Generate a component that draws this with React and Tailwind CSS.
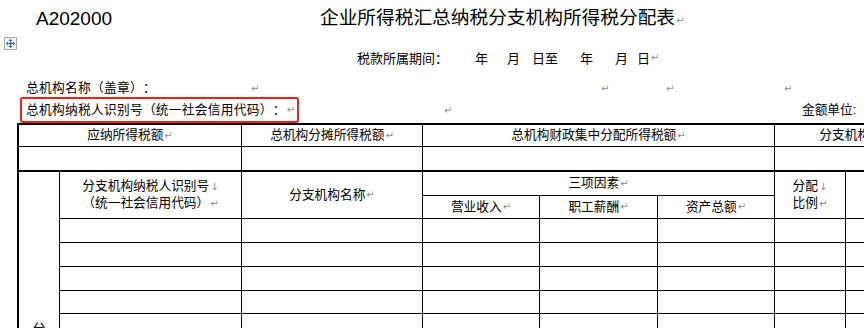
import React from "react";

// Word 段落标记
function Mark({ down = false }) {
  return (
    <span className="font-['DejaVu_Sans',sans-serif] text-[10px] leading-none text-[#8c8c8c] ml-[1px]">
      {down ? "↓" : "↵"}
    </span>
  );
}

function MoveIcon() {
  return (
    <svg width="13" height="13" viewBox="0 0 13 13">
      <rect x="0.5" y="0.5" width="12" height="12" fill="#f3f3f3" stroke="#a8a8a8" />
      <path d="M6.5 3v7M3 6.5h7" stroke="#2a62c8" strokeWidth="1" />
      <path d="M6.5 2l-2 2h4z M6.5 11l-2-2h4z M2 6.5l2-2v4z M11 6.5l-2-2v4z" fill="#2a62c8" />
    </svg>
  );
}

function Cell({ className = "", children }) {
  return (
    <div className={"border-r border-b border-black flex items-center justify-center text-center " + className}>
      {children}
    </div>
  );
}

export default function App() {
  const dataRows = [5, 6, 7, 8, 9];

  return (
    <div className="w-[864px] h-[328px] overflow-hidden bg-white text-black [text-spacing-trim:space-all] font-['Liberation_Sans','Noto_Sans_CJK_SC',sans-serif]">
      {/* 表号 + 标题 */}
      <div className="h-[36px] flex items-center">
        <div className="pl-[36px] w-[320px] text-[19px] leading-none">A202000</div>
        <div className="text-[18.7px] leading-none">
          企业所得税汇总纳税分支机构所得税分配表
          <Mark />
        </div>
      </div>

      {/* 表格移动手柄 */}
      <div className="h-[14px] pl-[4px] pt-[1px]">
        <MoveIcon />
      </div>

      {/* 税款所属期间 */}
      <div className="h-[16px] flex items-center text-[13px] leading-none pl-[357px]">
        <span>税款所属期间：</span>
        <span className="ml-[27px]">年</span>
        <span className="ml-[19px]">月</span>
        <span className="ml-[12px]">日至</span>
        <span className="ml-[22px]">年</span>
        <span className="ml-[22px]">月</span>
        <span className="ml-[9px]">日</span>
        <Mark />
      </div>

      <div className="h-[14px]" />

      {/* 总机构名称 */}
      <div className="h-[16px] flex items-center text-[12.7px] leading-none tracking-[0.3px]">
        <div className="w-[250px] pl-[26px]">总机构名称（盖章）：</div>
        <div className="w-[350px]"><Mark /></div>
        <div className="w-[65px]"><Mark /></div>
        <div className="w-[118px]"><Mark /></div>
        <div><Mark /></div>
      </div>

      {/* 纳税人识别号 */}
      <div className="relative z-10 mt-[1px] h-[26px] flex items-center text-[12.7px] leading-none pl-[20px]">
        <div className="w-[279px] h-[26px] border-2 border-[#e4241f] rounded-[3px] flex items-center pl-[4px] whitespace-nowrap tracking-[0.3px]">
          总机构纳税人识别号（统一社会信用代码）：
          <Mark />
        </div>
        <div className="w-[503px] pl-[144px]"><Mark /></div>
        <div className="whitespace-nowrap">金额单位:</div>
      </div>

      {/* 分配表 */}
      <div className="ml-[17px] w-[1000px] border-l-2 border-t-2 border-black grid grid-cols-[41px_182px_181px_117px_118px_117px_71px_155px] grid-rows-[22px_25px_24px_23px_24px_24px_24px_23px_24px] text-[12.7px] leading-[17px]">
        <Cell className="col-start-1 col-span-2 row-start-1">应纳所得税额<Mark /></Cell>
        <Cell className="col-start-3 row-start-1">总机构分摊所得税额<Mark /></Cell>
        <Cell className="col-start-4 col-span-3 row-start-1">总机构财政集中分配所得税额<Mark /></Cell>
        <Cell className="col-start-7 col-span-2 row-start-1">分支机构分摊所得税额<Mark /></Cell>

        <Cell className="col-start-1 col-span-2 row-start-2 border-b-2" />
        <Cell className="col-start-3 row-start-2 border-b-2" />
        <Cell className="col-start-4 col-span-3 row-start-2 border-b-2" />
        <Cell className="col-start-7 col-span-2 row-start-2 border-b-2" />

        <div className="col-start-1 row-start-3 row-span-7 border-r border-black flex flex-col items-center pt-[150px] leading-[15px]">
          <span>分</span>
          <span>支</span>
          <span>机</span>
          <span>构</span>
        </div>

        <Cell className="col-start-2 row-start-3 row-span-2 flex-col">
          <div>分支机构纳税人识别号<Mark down /></div>
          <div>（统一社会信用代码）<Mark /></div>
        </Cell>
        <Cell className="col-start-3 row-start-3 row-span-2">分支机构名称<Mark /></Cell>
        <Cell className="col-start-4 col-span-3 row-start-3">三项因素<Mark /></Cell>
        <Cell className="col-start-4 row-start-4">营业收入<Mark /></Cell>
        <Cell className="col-start-5 row-start-4">职工薪酬<Mark /></Cell>
        <Cell className="col-start-6 row-start-4">资产总额<Mark /></Cell>
        <Cell className="col-start-7 row-start-3 row-span-2 flex-col">
          <div>分配<Mark down /></div>
          <div>比例<Mark /></div>
        </Cell>
        <Cell className="col-start-8 row-start-3 row-span-2" />

        {dataRows.map((r) => (
          <React.Fragment key={r}>
            {[2, 3, 4, 5, 6, 7, 8].map((c) => (
              <Cell key={c} className="" />
            ))}
          </React.Fragment>
        ))}
      </div>
    </div>
  );
}
